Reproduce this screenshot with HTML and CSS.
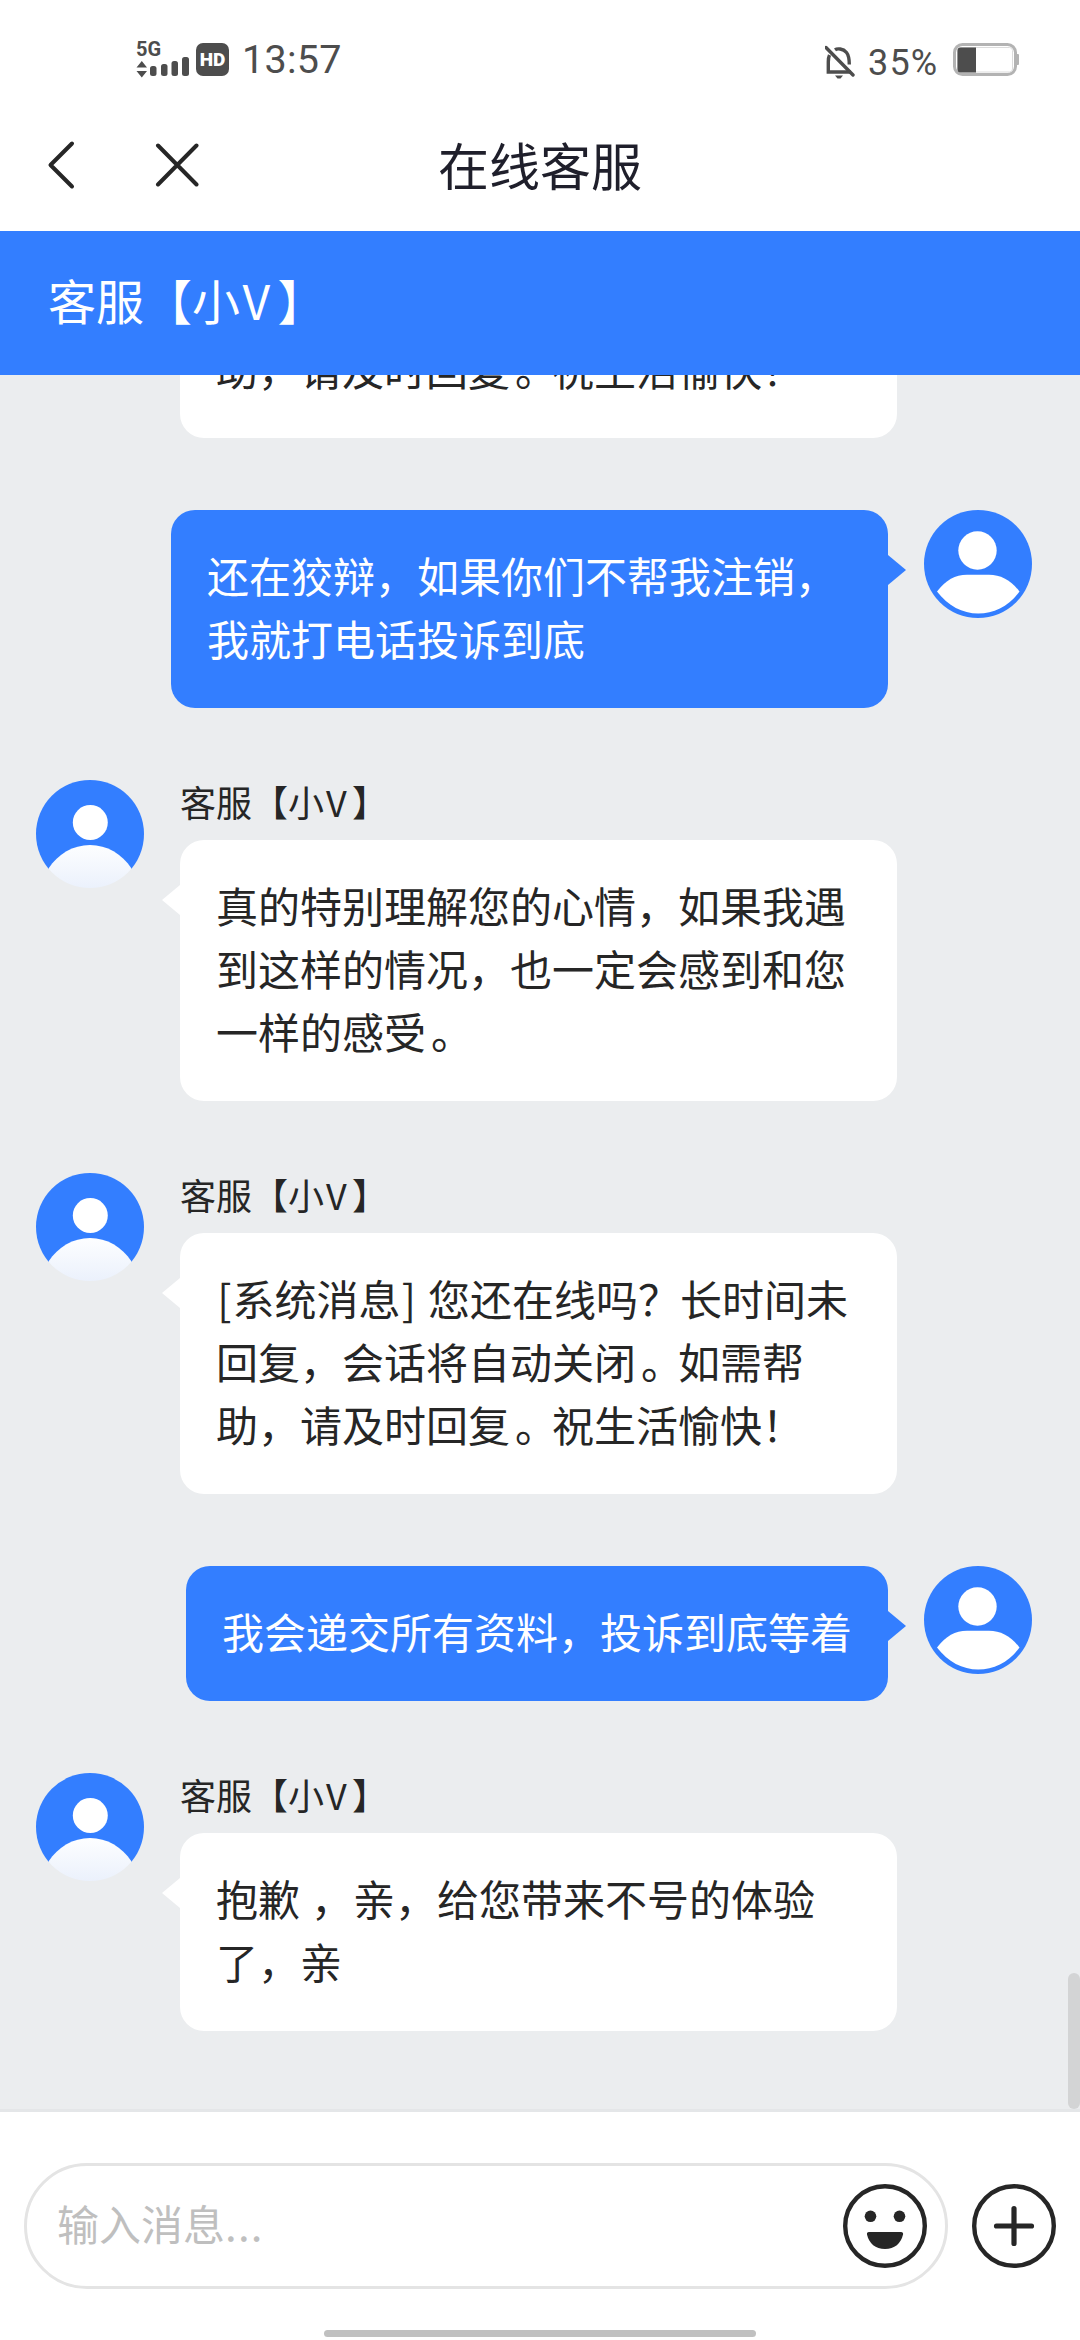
FILE: index.html
```html
<!DOCTYPE html>
<html lang="zh-CN">
<head>
<meta charset="utf-8">
<title>在线客服</title>
<link rel="stylesheet" href="styles.css">
</head>
<body>
<svg class="defs" width="0" height="0">
  <defs>
    <linearGradient id="fade" x1="0" y1="0" x2="0" y2="1">
      <stop offset="0" stop-color="#fdfeff"/>
      <stop offset="1" stop-color="#ebf1fc"/>
    </linearGradient>
    <clipPath id="disc"><circle cx="54" cy="54" r="54"/></clipPath>
    <symbol id="agent" viewBox="0 0 108 108">
      <g clip-path="url(#disc)">
        <rect width="108" height="89" fill="#337eff"/>
        <circle cx="54.300" cy="42.500" r="17.500" fill="#fff"/>
        <path d="M12.500 88.500C22 74 37 65 54 65s32 9 41.500 23.500V108h-83z" fill="url(#fade)"/>
      </g>
    </symbol>
    <symbol id="user" viewBox="0 0 108 108">
      <circle cx="54" cy="54" r="54" fill="#337eff"/>
      <circle cx="53.500" cy="40.500" r="19.200" fill="#fff"/>
      <path d="M13 81.500C22 70 31 64.700 43 64.700h22C77 64.700 86.500 70 95.500 81.500 85 96 70 103.500 54.200 103.500S24 96 13 81.500z" fill="#fff"/>
    </symbol>
  </defs>
</svg>
<div class="app">
  <div class="status">
    <div class="status-left">
      <div class="network">
        <span class="gen">5G</span>
        <svg width="54" height="20" viewBox="0 0 54 20" fill="#4d4d4d">
          <path d="M0.500 8.500L5.800 2l5.200 6.500zM0.500 12L5.800 18.500 11 12z"/>
          <rect x="14" y="7" width="6.500" height="10" rx="2.500"/>
          <rect x="25" y="5" width="6.500" height="12" rx="2.500"/>
          <rect x="35.500" y="2" width="6.500" height="15" rx="2.500"/>
          <rect x="46" y="-2" width="7" height="19" rx="2.500"/>
        </svg>
      </div>
      <span class="hd">HD</span>
      <span class="clock">13:57</span>
    </div>
    <div class="status-right">
      <svg width="30" height="34" viewBox="0 0 30 34" fill="none" stroke="#4d4d4d" stroke-width="3.400">
        <path d="M4.500 10C3.500 12 3.300 14 3.300 17v10H26"/>
        <path d="M10 4.800C12 3.300 18 3.200 21.500 7.500c2.500 3.200 2.800 7 2.800 12"/>
        <path d="M1 2.500L28 30" stroke-linecap="round"/>
        <path d="M10 30.500h8l-2.500 3h-3z" fill="#4d4d4d" stroke="none"/>
      </svg>
      <span class="percent">35%</span>
      <svg width="67" height="34" viewBox="0 0 67 34">
        <rect x="1.500" y="1.500" width="61" height="30" rx="8" fill="none" stroke="#b3b3b3" stroke-width="3"/>
        <rect x="4.500" y="4.500" width="55" height="24.500" rx="3" fill="#fff" stroke="#dcdcdc" stroke-width="1"/>
        <path d="M7.500 4.500H23v25H7.500a3 3 0 0 1-3-3v-19a3 3 0 0 1 3-3z" fill="#4d4d4d"/>
        <rect x="63" y="11" width="3" height="11" rx="1" fill="#b3b3b3"/>
      </svg>
    </div>
  </div>
  <div class="nav">
    <div class="nav-icons">
      <svg width="30" height="60" viewBox="0 0 30 60" fill="none" stroke="#262626" stroke-width="4" stroke-linecap="round" stroke-linejoin="round"><path d="M25 8.500L3.500 30 25 51.500"/></svg>
      <svg width="44" height="60" viewBox="0 0 44 60" fill="none" stroke="#262626" stroke-width="4" stroke-linecap="round"><path d="M3 10.500L41.500 49.500M41.500 10.500L3 49.500"/></svg>
    </div>
    <h1 class="nav-title">在线客服</h1>
    <div></div>
  </div>
  <div class="banner">客服【小<span class="latin">V</span>】</div>
  <div class="chat">
    <div class="row">
      <div class="spacer"></div>
      <div class="bubble">助，请及时回复<span class="stop">。</span>祝生活愉快！</div>
    </div>
    <div class="row mine">
      <div class="bubble own wide">还在狡辩，如果你们不帮我注销，<br>我就打电话投诉到底</div>
      <svg class="avatar"><use href="#user"/></svg>
    </div>
    <div class="row">
      <svg class="avatar"><use href="#agent"/></svg>
      <div class="body">
        <div class="name">客服【小<span class="latin">V</span>】</div>
        <div class="bubble">真的特别理解您的心情，如果我遇<br>到这样的情况，也一定会感到和您<br>一样的感受<span class="stop">。</span></div>
      </div>
    </div>
    <div class="row">
      <svg class="avatar"><use href="#agent"/></svg>
      <div class="body">
        <div class="name">客服【小<span class="latin">V</span>】</div>
        <div class="bubble"><span class="bracket">[</span>系统消息<span class="bracket">]</span> 您还在线吗？长时间未<br>回复，会话将自动关闭<span class="stop">。</span>如需帮<br>助，请及时回复<span class="stop">。</span>祝生活愉快！</div>
      </div>
    </div>
    <div class="row mine">
      <div class="bubble own">我会递交所有资料，投诉到底等着</div>
      <svg class="avatar"><use href="#user"/></svg>
    </div>
    <div class="row">
      <svg class="avatar"><use href="#agent"/></svg>
      <div class="body">
        <div class="name">客服【小<span class="latin">V</span>】</div>
        <div class="bubble">抱歉 ，亲，给您带来不号的体验<br>了，亲</div>
      </div>
    </div>
    <div class="scrollbar"></div>
  </div>
  <div class="composer">
    <div class="composer-row">
      <div class="field">
        <span class="placeholder">输入消息<span class="dots">...</span></span>
        <svg width="84" height="84" viewBox="0 0 84 84"><circle cx="42" cy="42" r="39.800" fill="none" stroke="#262626" stroke-width="4.400"/><circle cx="27.500" cy="32.300" r="5.800" fill="#262626"/><circle cx="56.500" cy="32.300" r="5.800" fill="#262626"/><path d="M26 48h32q2.500 0 2 2.500C58 59.500 51.500 65 42 65s-16-5.500-18-14.500q-.5-2.500 2-2.500z" fill="#262626"/></svg>
      </div>
      <svg width="84" height="84" viewBox="0 0 84 84" fill="none" stroke="#262626"><circle cx="42" cy="42" r="39.800" stroke-width="4.400"/><path d="M42 24.500v35M24.500 42h35" stroke-width="5.200" stroke-linecap="round"/></svg>
    </div>
    <div class="home"></div>
  </div>
</div>
</body>
</html>
```
FILE: styles.css
```css
* { box-sizing: border-box; }
body {
  margin: 0;
  background: #fff;
  color: #262626;
  font-family: "Noto Sans CJK SC", sans-serif;
}
svg { display: block; flex: none; }
.defs { position: absolute; }
.app {
  width: 1080px;
  height: 2340px;
  display: flex;
  flex-direction: column;
  overflow: hidden;
}
.status {
  height: 100px;
  flex: none;
  display: flex;
  justify-content: space-between;
  padding: 0 60px 0 136px;
  color: #4d4d4d;
  font-family: Roboto, sans-serif;
}
.status-left, .status-right { display: flex; align-items: flex-start; }
.network { width: 54px; padding-top: 40px; }
.network svg { overflow: visible; }
.gen {
  display: block;
  height: 19px;
  line-height: 19px;
  font-size: 20px;
  font-weight: 700;
}
.hd {
  width: 33px;
  height: 33px;
  margin: 43px 0 0 6px;
  border-radius: 7px;
  background: #4d4d4d;
  color: #fff;
  font-size: 19px;
  font-weight: 900;
  line-height: 34px;
  text-align: center;
}
.clock {
  margin: 36px 0 0 13px;
  font-size: 39.5px;
  line-height: 48px;
  letter-spacing: .3px;
}
.status-right svg:first-child { margin-top: 45px; }
.status-right svg:last-child { margin-top: 43px; }
.percent {
  width: 84px;
  margin-top: 39px;
  padding-left: 13px;
  margin-right: 14px;
  font-size: 36px;
  line-height: 48px;
  letter-spacing: 1.2px;
}
.nav {
  height: 131px;
  flex: none;
  display: grid;
  grid-template-columns: 1fr auto 1fr;
  padding: 0 47px;
}
.nav-icons { display: flex; gap: 78px; padding-top: 35px; }
.nav-title {
  margin: 0;
  padding-top: 28px;
  color: #1f1f2b;
  font-size: 51px;
  font-weight: 400;
  line-height: 72px;
}
.banner {
  height: 144px;
  flex: none;
  padding: 0 48px;
  background: #337eff;
  color: #fff;
  font-size: 48px;
  line-height: 136px;
}
.latin { display: inline-block; width: .78em; padding-right: .1em; text-align: center; }
.bracket { display: inline-block; width: .395em; text-align: center; }
.stop { margin: 0 -5px 0 5px; }
.dots { letter-spacing: 1.2px; }
.chat {
  position: relative;
  flex: 1;
  min-height: 0;
  display: flex;
  flex-direction: column;
  justify-content: flex-end;
  gap: 72px;
  padding: 0 36px 78px;
  overflow: hidden;
  background: #ebedef;
}
.row { display: flex; flex: none; gap: 36px; }
.spacer, .avatar { width: 108px; height: 108px; flex: none; }
.spacer { height: 0; }
.mine { justify-content: flex-end; padding-right: 12px; }
.name {
  height: 60px;
  font-size: 36px;
  line-height: 42px;
}
.bubble {
  position: relative;
  width: 717px;
  padding: 33px 36px 39px;
  border-radius: 24px;
  background: #fff;
  font-size: 42px;
  line-height: 63px;
  white-space: nowrap;
  word-spacing: 1.5px;
}
.bubble::before {
  content: "";
  position: absolute;
  top: 45px;
  left: -18px;
  border: solid transparent;
  border-width: 15px 18px 15px 0;
  border-right-color: #fff;
}
.spacer + .bubble::before { display: none; }
.own { width: auto; background: #337eff; color: #fff; }
.own.wide { width: 717px; }
.own::before {
  left: auto;
  right: -18px;
  border-width: 15px 0 15px 18px;
  border-left-color: #337eff;
}
.scrollbar {
  position: absolute;
  right: 0;
  bottom: 0;
  width: 12px;
  height: 136px;
  border-radius: 6px;
  background: #d3d4d5;
}
.composer {
  height: 231px;
  flex: none;
  border-top: 3px solid #e4e6e8;
  background: #fff;
}
.composer-row {
  display: flex;
  align-items: center;
  justify-content: space-between;
  padding: 51px 24px 0;
}
.field {
  width: 924px;
  height: 126px;
  display: flex;
  align-items: center;
  justify-content: space-between;
  padding: 0 18px 0 30px;
  border: 3px solid #e4e4e4;
  border-radius: 63px;
}
.placeholder { padding-bottom: 6px; color: #bfbfbf; font-size: 42px; line-height: 60px; }
.home {
  width: 432px;
  height: 7px;
  margin: 41px auto 0;
  border-radius: 4px;
  background: #c0c0c0;
}
```
